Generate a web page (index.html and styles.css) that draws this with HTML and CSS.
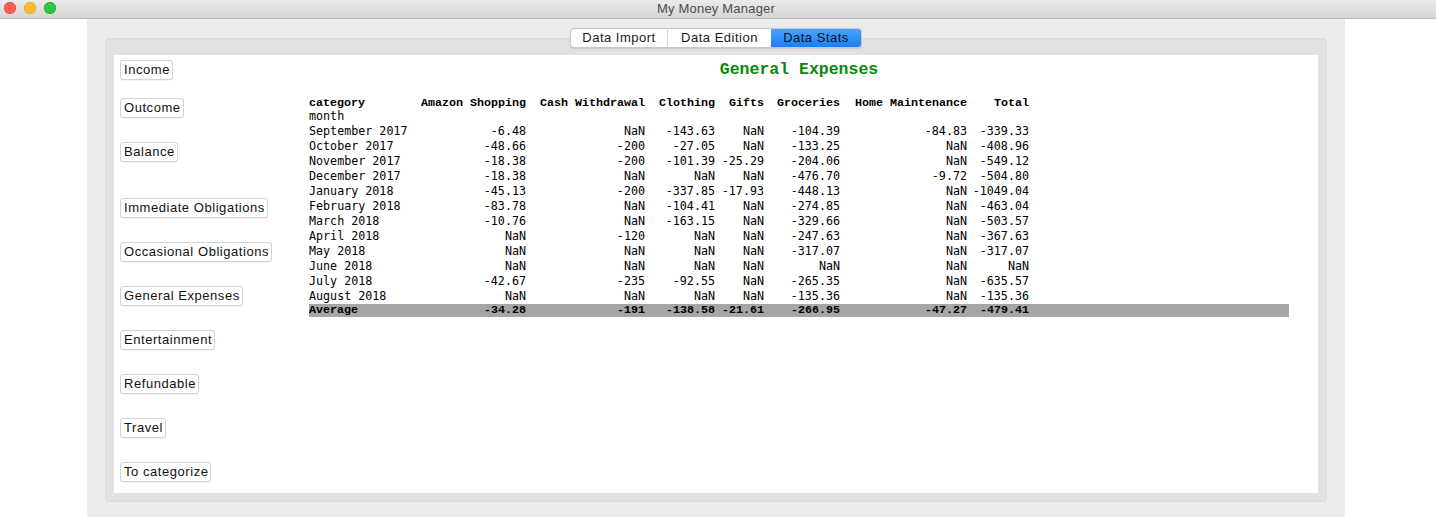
FILE: index.html
```html
<!DOCTYPE html>
<html>
<head>
<meta charset="utf-8">
<title>My Money Manager</title>
<link rel="stylesheet" href="styles.css">
</head>
<body>
<div class="titlebar">
  <div class="lights">
    <span class="light red"></span>
    <span class="light yellow"></span>
    <span class="light green"></span>
  </div>
  <div class="wintitle">My Money Manager</div>
</div>
<div class="desk">
  <div class="side side-left"></div>
  <div class="window">
    <div class="tabs">
      <div class="seg seg-import">Data Import</div>
      <div class="seg seg-edition">Data Edition</div>
      <div class="seg seg-stats active">Data Stats</div>
    </div>
    <div class="group">
      <div class="panel">
        <div class="nav">
          <div class="btn b-income">Income</div>
          <div class="btn b-outcome">Outcome</div>
          <div class="btn b-balance">Balance</div>
          <div class="btn b-immediate">Immediate Obligations</div>
          <div class="btn b-std">Occasional Obligations</div>
          <div class="btn b-std">General Expenses</div>
          <div class="btn b-std">Entertainment</div>
          <div class="btn b-std">Refundable</div>
          <div class="btn b-std">Travel</div>
          <div class="btn b-std">To categorize</div>
        </div>
        <div class="stats">
          <h1 class="stitle">General Expenses</h1>
          <table class="df">
            <colgroup>
              <col class="c0"><col class="c1"><col class="c2"><col class="c3"><col class="c4"><col class="c5"><col class="c6"><col class="c7"><col class="cf">
            </colgroup>
            <thead>
              <tr class="hrow">
                <th class="l">category</th><th>Amazon Shopping</th><th>Cash Withdrawal</th><th>Clothing</th><th>Gifts</th><th>Groceries</th><th>Home Maintenance</th><th>Total</th><th></th>
              </tr>
              <tr class="irow">
                <td class="l">month</td><td></td><td></td><td></td><td></td><td></td><td></td><td></td><td></td>
              </tr>
            </thead>
            <tbody>
              <tr><td class="l">September 2017</td><td>-6.48</td><td>NaN</td><td>-143.63</td><td>NaN</td><td>-104.39</td><td>-84.83</td><td>-339.33</td><td></td></tr>
              <tr><td class="l">October 2017</td><td>-48.66</td><td>-200</td><td>-27.05</td><td>NaN</td><td>-133.25</td><td>NaN</td><td>-408.96</td><td></td></tr>
              <tr><td class="l">November 2017</td><td>-18.38</td><td>-200</td><td>-101.39</td><td>-25.29</td><td>-204.06</td><td>NaN</td><td>-549.12</td><td></td></tr>
              <tr><td class="l">December 2017</td><td>-18.38</td><td>NaN</td><td>NaN</td><td>NaN</td><td>-476.70</td><td>-9.72</td><td>-504.80</td><td></td></tr>
              <tr><td class="l">January 2018</td><td>-45.13</td><td>-200</td><td>-337.85</td><td>-17.93</td><td>-448.13</td><td>NaN</td><td>-1049.04</td><td></td></tr>
              <tr><td class="l">February 2018</td><td>-83.78</td><td>NaN</td><td>-104.41</td><td>NaN</td><td>-274.85</td><td>NaN</td><td>-463.04</td><td></td></tr>
              <tr><td class="l">March 2018</td><td>-10.76</td><td>NaN</td><td>-163.15</td><td>NaN</td><td>-329.66</td><td>NaN</td><td>-503.57</td><td></td></tr>
              <tr><td class="l">April 2018</td><td>NaN</td><td>-120</td><td>NaN</td><td>NaN</td><td>-247.63</td><td>NaN</td><td>-367.63</td><td></td></tr>
              <tr><td class="l">May 2018</td><td>NaN</td><td>NaN</td><td>NaN</td><td>NaN</td><td>-317.07</td><td>NaN</td><td>-317.07</td><td></td></tr>
              <tr><td class="l">June 2018</td><td>NaN</td><td>NaN</td><td>NaN</td><td>NaN</td><td>NaN</td><td>NaN</td><td>NaN</td><td></td></tr>
              <tr><td class="l">July 2018</td><td>-42.67</td><td>-235</td><td>-92.55</td><td>NaN</td><td>-265.35</td><td>NaN</td><td>-635.57</td><td></td></tr>
              <tr><td class="l">August 2018</td><td>NaN</td><td>NaN</td><td>NaN</td><td>NaN</td><td>-135.36</td><td>NaN</td><td>-135.36</td><td></td></tr>
              <tr class="avg"><td class="l">Average</td><td>-34.28</td><td>-191</td><td>-138.58</td><td>-21.61</td><td>-266.95</td><td>-47.27</td><td>-479.41</td><td></td></tr>
            </tbody>
          </table>
        </div>
      </div>
    </div>
  </div>
  <div class="side"></div>
</div>
</body>
</html>
```
FILE: styles.css
```css
html, body {
  margin: 0;
  padding: 0;
  background: #ffffff;
  font-family: "Liberation Sans", Arial, sans-serif;
  overflow: hidden;
}

.titlebar {
  height: 18px;
  border-bottom: 1px solid #b9b9b9;
  background: linear-gradient(#ebebeb, #d6d6d6);
  display: flex;
  align-items: center;
  position: relative;
}

.lights {
  display: flex;
  gap: 8px;
  padding-left: 4px;
  position: absolute;
  left: 0;
  top: 2px;
}

.light {
  width: 12px;
  height: 12px;
  border-radius: 50%;
  display: block;
}
.light.red { background: #fc5b57; box-shadow: inset 0 0 0 0.5px #e2463f; }
.light.yellow { background: #fdbc2e; box-shadow: inset 0 0 0 0.5px #e1a116; }
.light.green { background: #2ac840; box-shadow: inset 0 0 0 0.5px #1daa2c; }

.wintitle {
  flex: 1;
  text-align: center;
  font-size: 13px;
  letter-spacing: 0.2px;
  color: #4d4d4d;
  line-height: 18px;
  padding-right: 4px;
}

.desk {
  display: flex;
  height: 498px;
}

.side {
  flex: 1;
  background: #ffffff;
}
.side-left {
  flex: none;
  width: 87px;
}

.window {
  width: 1258px;
  background: #ececec;
  padding: 9px 18px 0 18px;
  box-sizing: border-box;
  display: flex;
  flex-direction: column;
}

.tabs {
  align-self: center;
  display: flex;
  height: 20px;
  box-sizing: border-box;
  border: 1px solid #c8c8c8;
  border-radius: 4px;
  background: #ffffff;
  position: relative;
  z-index: 2;
  overflow: hidden;
  box-shadow: 0 0.5px 1px rgba(0,0,0,0.12);
}

.seg {
  font-size: 13px;
  letter-spacing: 0.5px;
  line-height: 18px;
  text-align: center;
  color: #1a1a1a;
}
.seg-import { width: 96px; border-right: 1px solid #d8d8d8; }
.seg-edition { width: 103px; }
.seg-stats { width: 90px; }
.seg.active {
  background: linear-gradient(#4aa3fd, #1a7ef6);
  color: #111111;
}

.group {
  margin-top: -10px;
  height: 464px;
  box-sizing: border-box;
  background: #e1e1e1;
  border: 1px solid #d9d9d9;
  border-radius: 4px;
  padding: 16px 8px 8px 8px;
}

.panel {
  background: #ffffff;
  height: 438px;
  display: flex;
}

.nav {
  width: 195px;
  box-sizing: border-box;
  padding: 5px 0 0 6px;
  display: flex;
  flex-direction: column;
  align-items: flex-start;
}

.btn {
  height: 20px;
  box-sizing: border-box;
  border: 1px solid #d3d3d3;
  border-radius: 3px;
  background: #ffffff;
  padding: 0 2px 0 3px;
  font-size: 13px;
  letter-spacing: 0.55px;
  line-height: 18px;
  color: #111111;
  box-shadow: 0 0.5px 0.5px rgba(0,0,0,0.08);
  white-space: nowrap;
}
.b-outcome { margin-top: 18px; }
.b-balance { margin-top: 24px; }
.b-immediate { margin-top: 36px; }
.b-std { margin-top: 24px; }

.stats {
  width: 980px;
  padding-top: 5px;
}

.stitle {
  margin: 0 0 14px 0;
  text-align: center;
  font-family: "Liberation Mono", "Courier New", monospace;
  font-weight: bold;
  font-size: 16.5px;
  line-height: 20px;
  color: #0a880a;
}

.df {
  width: 980px;
  table-layout: fixed;
  border-collapse: collapse;
  border-spacing: 0;
  font-family: "DejaVu Sans Mono", monospace;
  font-size: 11.7px;
  color: #000000;
}

.c0 { width: 112px; }
.c1 { width: 105px; }
.c2 { width: 119px; }
.c3 { width: 70px; }
.c4 { width: 49px; }
.c5 { width: 76px; }
.c6 { width: 127px; }
.c7 { width: 62px; }
.cf { width: 260px; }

.df th, .df td {
  padding: 0;
  text-align: right;
  white-space: nowrap;
  line-height: 15px;
  height: 15px;
  vertical-align: middle;
}
.df .l { text-align: left; }

.df th {
  font-family: "Liberation Mono", "Courier New", monospace;
  font-weight: bold;
  font-size: 11.67px;
  line-height: 12px;
  height: 12px;
  padding-top: 3px;
}

.df .avg td {
  font-family: "Liberation Mono", "Courier New", monospace;
  font-weight: bold;
  font-size: 11.67px;
  background: #a6a6a6;
  line-height: 13px;
  height: 13px;
}
```
